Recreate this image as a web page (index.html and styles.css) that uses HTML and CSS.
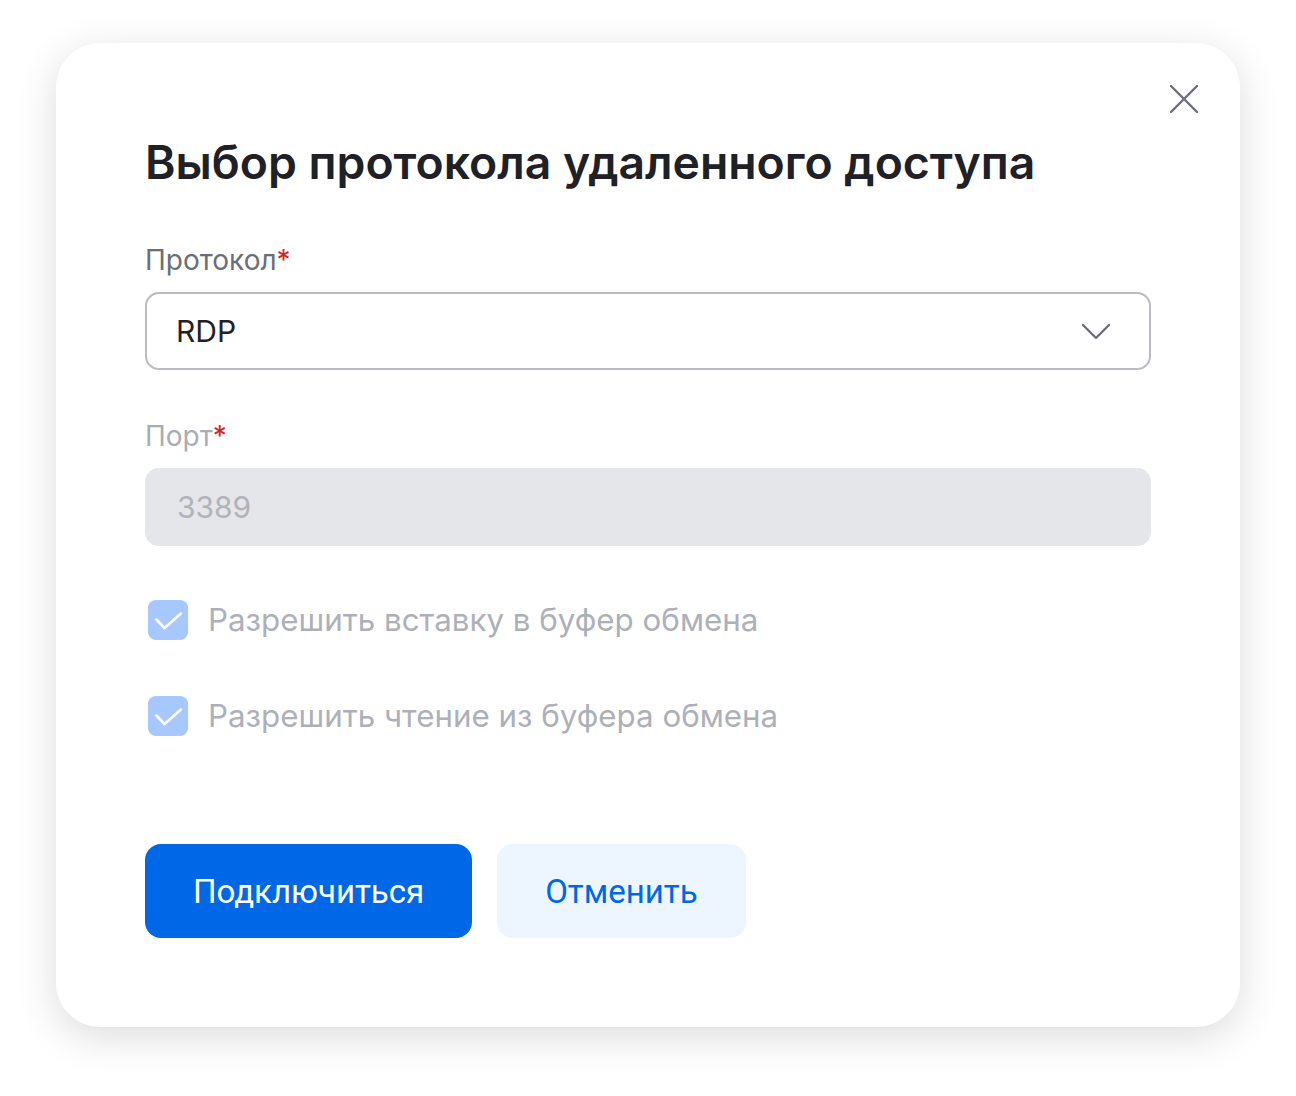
FILE: index.html
```
<!DOCTYPE html>
<html lang="ru">

<head>
    <meta charset="UTF-8">
    <meta name="viewport" content="width=device-width, initial-scale=1.0">
    <title>Выбор протокола удаленного доступа</title>
    <link rel="stylesheet" href="styles.css">
</head>

<body>
    <div class="modal">
        <button class="close" aria-label="Закрыть">
            <svg width="28" height="28" viewBox="0 0 28 28" fill="none">
                <path d="M1 1L27 27M27 1L1 27" stroke="#6c6f78" stroke-width="2.4" stroke-linecap="round"/>
            </svg>
        </button>

        <h1 class="title">Выбор протокола удаленного доступа</h1>

        <form class="form">
            <div class="field">
                <label class="label">Протокол<span class="req">*</span></label>
                <div class="select">
                    <span>RDP</span>
                    <svg width="30" height="18" viewBox="0 0 30 18" fill="none">
                        <path d="M2 2L15 15L28 2" stroke="#6c6f78" stroke-width="2.4" stroke-linecap="round" stroke-linejoin="round"/>
                    </svg>
                </div>
            </div>

            <div class="field last">
                <label class="label disabled">Порт<span class="req">*</span></label>
                <input class="input" type="text" value="3389" disabled>
            </div>

            <div class="checks">
                <label class="check">
                    <span class="box">
                        <svg width="40" height="40" viewBox="0 0 40 40" fill="none">
                            <path d="M8.5 19.5L16.5 28L33 13.5" stroke="#fff" stroke-width="2.6" stroke-linecap="round" stroke-linejoin="round"/>
                        </svg>
                    </span>
                    Разрешить вставку в буфер обмена
                </label>
                <label class="check">
                    <span class="box">
                        <svg width="40" height="40" viewBox="0 0 40 40" fill="none">
                            <path d="M8.5 19.5L16.5 28L33 13.5" stroke="#fff" stroke-width="2.6" stroke-linecap="round" stroke-linejoin="round"/>
                        </svg>
                    </span>
                    Разрешить чтение из буфера обмена
                </label>
            </div>

            <div class="actions">
                <button class="btn primary" type="button">Подключиться</button>
                <button class="btn secondary" type="button">Отменить</button>
            </div>
        </form>
    </div>
</body>

</html>
```

FILE: styles.css
```
body {
    margin: 0;
    padding: 43px 56px;
    background-color: #fff;
    font-family: Inter, "Noto Sans", sans-serif;
}

.modal {
    position: relative;
    box-sizing: border-box;
    width: 1184px;
    height: 984px;
    padding: 91px 89px 0;
    background-color: #fff;
    border-radius: 44px;
    box-shadow: 0 10px 40px rgba(0, 0, 0, .14);
}

.close {
    position: absolute;
    top: 42px;
    right: 42px;
    width: 28px;
    height: 28px;
    padding: 0;
    border: 0;
    background: none;
    cursor: pointer;
}
.close svg {
    display: block;
}

.title {
    margin: 0;
    font-size: 46.3px;
    line-height: 56px;
    font-weight: 600;
    color: #1f2126;
}

.form {
    display: flex;
    flex-direction: column;
    margin-top: 52px;
}

.field {
    display: flex;
    flex-direction: column;
    gap: 14px;
    margin-bottom: 48px;
}
.field.last {
    margin-bottom: 54px;
}

.label {
    font-size: 28px;
    line-height: 36px;
    color: #6b6e77;
}
.label.disabled {
    color: #a9acb4;
}
.req {
    color: #e0201e;
}

.select, .input {
    box-sizing: border-box;
    height: 78px;
    border-radius: 14px;
    font-family: inherit;
    font-size: 30px;
}

.select {
    display: flex;
    align-items: center;
    justify-content: space-between;
    padding: 0 38px 0 29px;
    border: 2px solid #b9bcc3;
    color: #1f2126;
}
.select svg {
    display: block;
    margin-top: 2px;
}

.input {
    width: 100%;
    padding: 0 32px;
    border: 0;
    background-color: #e4e6ea;
    color: #b0b3ba;
}

.checks {
    display: flex;
    flex-direction: column;
    gap: 56px;
}

.check {
    display: flex;
    align-items: center;
    gap: 20px;
    padding-left: 3px;
    font-size: 31.3px;
    line-height: 40px;
    color: #adb0b8;
}

.box {
    display: flex;
    width: 40px;
    height: 40px;
    border-radius: 8px;
    background-color: #a6c8ff;
}
.box svg {
    display: block;
}

.actions {
    display: flex;
    gap: 25px;
    margin-top: 108px;
}

.btn {
    height: 94px;
    padding: 0 48px;
    border: 0;
    border-radius: 16px;
    font-family: Roboto, sans-serif;
    font-size: 33px;
    cursor: pointer;
}
.primary {
    background-color: #0068e6;
    color: #fff;
}
.secondary {
    background-color: #edf5ff;
    color: #0068e6;
}
```
